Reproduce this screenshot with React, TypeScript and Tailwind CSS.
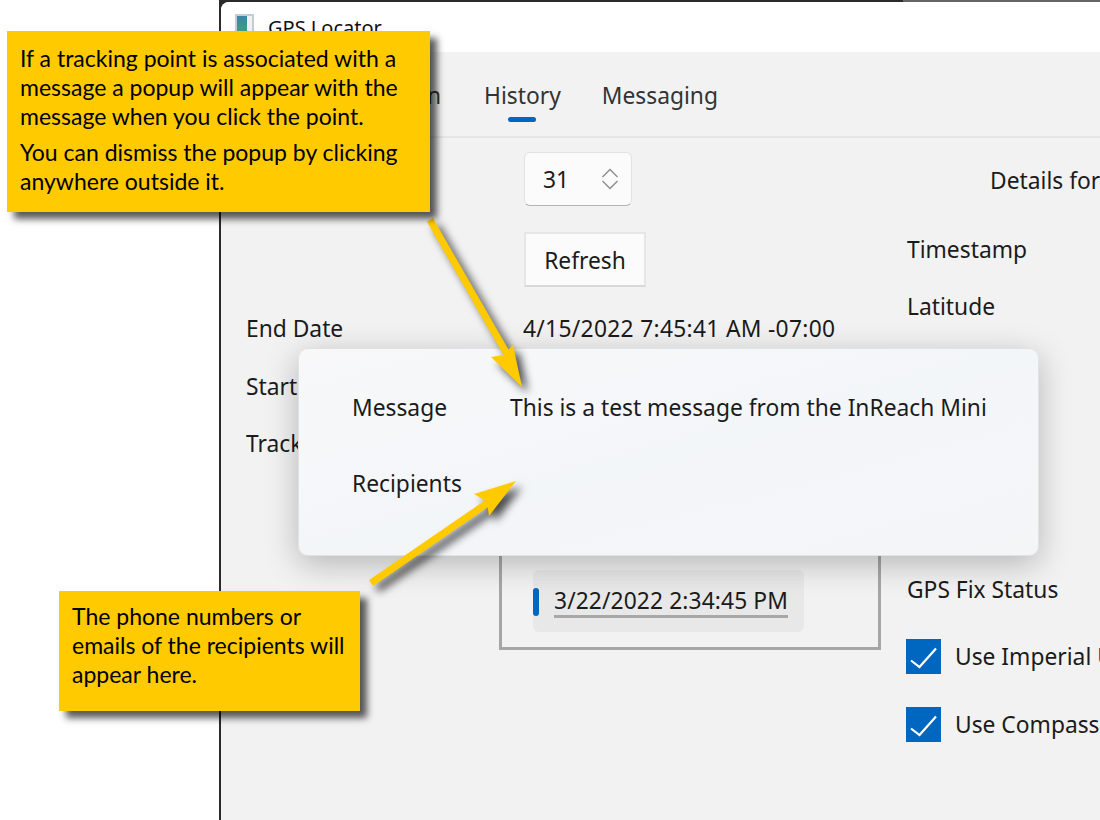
import React from "react";

const seg = "font-['Noto_Sans','Open_Sans',sans-serif]";

function Check() {
  return (
    <div className="w-[35px] h-[35px] bg-[#0067c0] flex items-center justify-center shrink-0">
      <svg width="35" height="35" viewBox="0 0 35 35" fill="none">
        <path d="M5 21.5L13.5 28L30 9.5" stroke="white" strokeWidth="2.2" />
      </svg>
    </div>
  );
}

function Callout({ className, children }: { className: string; children: React.ReactNode }) {
  return (
    <div className={`absolute bg-[#ffcb00] text-black font-['Lato',sans-serif] text-[23px] leading-[29px] shadow-[7px_7px_7px_rgba(0,0,0,0.65)] ${className}`}>
      {children}
    </div>
  );
}

export default function App() {
  return (
    <div className={`relative w-[1100px] h-[820px] overflow-hidden bg-white ${seg} text-[#1b1b1b]`}>
      {/* App window */}
      <div className="absolute left-[219px] top-0 w-[881px] h-[820px] bg-[linear-gradient(to_right,#2b2b2b_684px,#666666_684px)] pl-[2px] pt-[2px]">
        <div className="w-full h-full flex flex-col bg-[#f2f2f2] rounded-tl-lg overflow-hidden">
          <div className="h-[50px] bg-white flex items-start pt-[12px] pl-[14px] gap-[14px] shrink-0">
            <div className="w-[19px] h-[20px] border-2 border-[#c4ccd4] bg-[#eef2f4] flex">
              <div className="w-[10px] bg-gradient-to-b from-[#3a86a8] to-[#3f9f7f]" />
            </div>
            <span className="text-[20px] leading-[28px] text-[#111]">GPS Locator</span>
          </div>

          <div className="h-[86px] shrink-0 border-b-2 border-[#e5e5e5] flex items-start pl-[128px] pt-[26px] gap-[41px] text-[22.8px] leading-[36px] text-[#333]">
            <span className="w-[94px] pr-[2px] text-right whitespace-nowrap">Location</span>
            <div className="flex flex-col items-center">
              <span>History</span>
              <div className="w-[28px] h-[5px] rounded-full bg-[#0067c0] mt-[3px]" />
            </div>
            <span>Messaging</span>
          </div>

          <div className="flex-1 flex text-[22.8px] leading-[32px]">
            <div className="w-[302px] shrink-0 pl-[25px] pt-[175px] flex flex-col">
              <div>End Date</div>
              <div className="mt-[26px]">Start</div>
              <div className="mt-[25px]">Track</div>
            </div>

            <div className="w-[383px] shrink-0 relative">
              <div className="pt-[14px] flex flex-col items-start">
                <div className="ml-[1px] w-[108px] h-[54px] bg-[#fbfbfb] border border-[#e2e2e2] border-b-[#b5b5b5] rounded-md flex items-center justify-between pl-[18px] pr-[12px]">
                  <span className="pt-[2px]">31</span>
                  <svg width="18" height="26" viewBox="0 0 18 26" fill="none" stroke="#8a8a8a" strokeWidth="1.3">
                    <path d="M1.5 11L9 3.5L16.5 11" />
                    <path d="M1.5 15L9 22.5L16.5 15" />
                  </svg>
                </div>
                <div className="ml-[1px] mt-[26px] w-[122px] h-[55px] bg-[#fbfbfb] border-2 border-[#e6e6e6] border-b-[#d8d8d8] flex items-center justify-center">
                  <span className="pt-[2px]">Refresh</span>
                </div>
                <div className="mt-[26px] whitespace-nowrap tracking-[0.3px]">4/15/2022 7:45:41 AM -07:00</div>
              </div>
              <div className="absolute left-[-24px] top-[298px] w-[382px] h-[214px] border-[3px] border-[#a6a6a6] flex items-end pl-[31px] pb-[15px]">
                <div className="w-[271px] h-[62px] rounded-md bg-[#e8e8e8] flex items-center pt-[2px]">
                  <div className="w-[6px] h-[28px] rounded-full bg-[#0067c0]" />
                  <span className="ml-[15px] border-b-[3px] border-[#a8a8a8] leading-[28px] whitespace-nowrap tracking-[0.1px]">3/22/2022 2:34:45 PM</span>
                </div>
              </div>
            </div>

            <div className="flex-1 whitespace-nowrap overflow-hidden pt-[27px]">
              <div className="pl-[84px]">Details for</div>
              <div className="mt-[37px] pl-[1px]">Timestamp</div>
              <div className="mt-[25px] pl-[1px]">Latitude</div>
              <div className="mt-[251px] pl-[1px]">GPS Fix Status</div>
              <div className="mt-[33px] flex items-center gap-[14px]"><Check /><span>Use Imperial Units</span></div>
              <div className="mt-[33px] flex items-center gap-[14px]"><Check /><span>Use Compass</span></div>
            </div>
          </div>
        </div>
      </div>

      {/* Popup */}
      <div className="absolute left-[298px] top-[348px] w-[741px] h-[208px] rounded-[10px] border border-[#e2e2e2] bg-gradient-to-br from-[#f8f8f9] via-[#f3f6f9] to-[#f4f5f7] shadow-[0_8px_32px_rgba(0,0,0,0.25)] text-[22.8px] leading-[32px] pl-[53px] pt-[43px]">
        <div className="grid grid-cols-[158px_1fr] gap-y-[44px] whitespace-nowrap">
          <div>Message</div>
          <div>This is a test message from the InReach Mini</div>
          <div>Recipients</div>
          <div />
        </div>
      </div>

      {/* Arrows */}
      <svg className="absolute left-0 top-0 drop-shadow-[6px_6px_4px_rgba(0,0,0,0.7)]" width="1100" height="820" viewBox="0 0 1100 820">
        <path d="M430 220L507 354" stroke="#ffcb00" strokeWidth="7" />
        <polygon points="522,387 491,357 503,355 513,345" fill="#ffcb00" />
        <path d="M371 583L489 502" stroke="#ffcb00" strokeWidth="7" />
        <polygon points="516,481 474,494 487,502 489,516" fill="#ffcb00" />
      </svg>

      <Callout className="left-[7px] top-[31px] w-[423px] h-[181px] pl-[13px] pt-[13px]">
        <p>If a tracking point is associated with a<br />message a popup will appear with the<br />message when you click the point.</p>
        <p className="mt-[7px]">You can dismiss the popup by clicking<br />anywhere outside it.</p>
      </Callout>
      <Callout className="left-[59px] top-[591px] w-[301px] h-[120px] pl-[13px] pt-[11px]">
        <p>The phone numbers or<br />emails of the recipients will<br />appear here.</p>
      </Callout>
    </div>
  );
}
